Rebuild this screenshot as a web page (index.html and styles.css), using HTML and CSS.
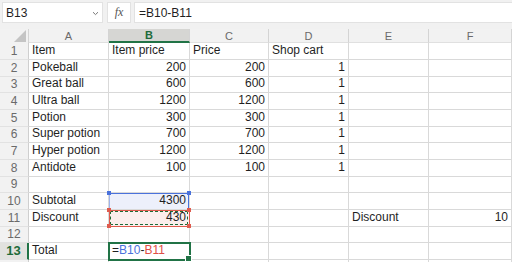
FILE: index.html
```html
<!DOCTYPE html>
<html lang="en">
<head>
  <meta charset="UTF-8" />
  <title>Pokemart sheet</title>
  <link rel="stylesheet" href="styles.css">
</head>
<body>
  <!-- Formula bar -->
  <div class="toolbar">
    <div class="name-box">
      <span>B13</span>
      <svg class="chevron" width="7" height="5" viewBox="0 0 7 5"><path d="M1 1.2 L3.5 3.6 L6 1.2" fill="none" stroke="#777" stroke-width="1"/></svg>
    </div>
    <div class="fx-box"><span class="fx">fx</span></div>
    <div class="formula-box">=B10-B11</div>
  </div>

  <!-- Sheet -->
  <div class="sheet">
    <div class="hd corner"><span class="tri"></span></div>
    <div class="hd col">A</div>
    <div class="hd col sel">B</div>
    <div class="hd col">C</div>
    <div class="hd col">D</div>
    <div class="hd col">E</div>
    <div class="hd col">F</div>

    <div class="hd row">1</div>
    <div class="c">Item</div><div class="c">Item price</div><div class="c">Price</div><div class="c">Shop cart</div><div class="c"></div><div class="c"></div>

    <div class="hd row">2</div>
    <div class="c">Pokeball</div><div class="c n">200</div><div class="c n">200</div><div class="c n">1</div><div class="c"></div><div class="c"></div>

    <div class="hd row">3</div>
    <div class="c">Great ball</div><div class="c n">600</div><div class="c n">600</div><div class="c n">1</div><div class="c"></div><div class="c"></div>

    <div class="hd row">4</div>
    <div class="c">Ultra ball</div><div class="c n">1200</div><div class="c n">1200</div><div class="c n">1</div><div class="c"></div><div class="c"></div>

    <div class="hd row">5</div>
    <div class="c">Potion</div><div class="c n">300</div><div class="c n">300</div><div class="c n">1</div><div class="c"></div><div class="c"></div>

    <div class="hd row">6</div>
    <div class="c">Super potion</div><div class="c n">700</div><div class="c n">700</div><div class="c n">1</div><div class="c"></div><div class="c"></div>

    <div class="hd row">7</div>
    <div class="c">Hyper potion</div><div class="c n">1200</div><div class="c n">1200</div><div class="c n">1</div><div class="c"></div><div class="c"></div>

    <div class="hd row">8</div>
    <div class="c">Antidote</div><div class="c n">100</div><div class="c n">100</div><div class="c n">1</div><div class="c"></div><div class="c"></div>

    <div class="hd row">9</div>
    <div class="c"></div><div class="c"></div><div class="c"></div><div class="c"></div><div class="c"></div><div class="c"></div>

    <div class="hd row">10</div>
    <div class="c">Subtotal</div><div class="c n ref-blue">4300<i class="h tl"></i><i class="h tr"></i></div><div class="c"></div><div class="c"></div><div class="c"></div><div class="c"></div>

    <div class="hd row">11</div>
    <div class="c">Discount</div><div class="c n ref-red">430<i class="h tl"></i><i class="h tr"></i><i class="h bl"></i><i class="h br"></i></div><div class="c"></div><div class="c"></div><div class="c">Discount</div><div class="c n">10</div>

    <div class="hd row">12</div>
    <div class="c"></div><div class="c"></div><div class="c"></div><div class="c"></div><div class="c"></div><div class="c"></div>

    <div class="hd row sel">13</div>
    <div class="c">Total</div><div class="c active">=<span class="blue">B10</span>-<span class="red">B11</span></div><div class="c"></div><div class="c"></div><div class="c"></div><div class="c"></div>

    <div class="hd row"></div>
    <div class="c"></div><div class="c"></div><div class="c"></div><div class="c"></div><div class="c"></div><div class="c"></div>
  </div>
</body>
</html>
```

FILE: styles.css
```css
* { box-sizing: border-box; margin: 0; padding: 0; }
body {
  background: #fff;
  font-family: 'Liberation Sans', Arial, sans-serif;
  color: #1f1f1f;
  width: 512px;
  height: 262px;
  overflow: hidden;
}

/* formula bar */
.toolbar {
  display: flex;
  align-items: flex-start;
  height: 29px;
  padding: 2px 0 0 2px;
  background: #f1f1f1;
}
.name-box {
  display: flex;
  align-items: center;
  justify-content: space-between;
  width: 101px;
  height: 21px;
  padding: 0 3px 0 3px;
  background: #fff;
  border: 1px solid #e2e2e2;
  font-size: 12px;
}
.chevron { margin-top: 1px; }
.fx-box {
  display: flex;
  align-items: center;
  justify-content: center;
  width: 24px;
  height: 21px;
  margin-left: 4px;
  background: #fff;
  border: 1px solid #e2e2e2;
}
.fx {
  font-family: 'Liberation Serif', 'Times New Roman', serif;
  font-style: italic;
  font-size: 12px;
  color: #555;
}
.formula-box {
  flex: 1;
  height: 21px;
  margin-left: 3px;
  padding: 3px 0 0 4px;
  background: #fff;
  border: 1px solid #e2e2e2;
  border-right: none;
  font-size: 12px;
}

/* grid */
.sheet {
  display: grid;
  grid-template-columns: 29px 80px 81px 79px 80px 80px 83px;
  grid-template-rows: 14px repeat(4, 17px 17px 16px) 17px 17px;
}
.hd {
  background: #f2f2f2;
  color: #6a6a6a;
  font-size: 11px;
  display: flex;
  align-items: center;
  justify-content: center;
}
.corner {
  position: relative;
  border-right: 1px solid #d4d4d4;
}
.tri {
  position: absolute;
  right: 2px;
  bottom: 1px;
  width: 12px;
  height: 12px;
  background: #c4c4c4;
  clip-path: polygon(100% 0, 100% 100%, 0 100%);
}
.col {
  border-right: 1px solid #d4d4d4;
  border-bottom: 1px solid #e0e0e0;
}
.col.sel {
  background: #d6d6d3;
  color: #1d6b3a;
  font-weight: bold;
  border-bottom: 2px solid #217346;
}
.row {
  font-size: 12px;
  border-bottom: 1px solid #e2e2e2;
  border-right: 1px solid #cfcfcf;
  align-items: flex-end;
  padding-bottom: 1px;
}
.row.sel {
  background: #e2e2df;
  color: #1d6b3a;
  font-weight: bold;
  font-size: 13px;
  border-right: 2px solid #217346;
}

.c {
  position: relative;
  display: flex;
  align-items: flex-end;
  padding: 0 3px 1px 3px;
  font-size: 12px;
  line-height: 15px;
  white-space: nowrap;
  border-right: 1px solid #d9d9d9;
  border-bottom: 1px solid #d9d9d9;
}
.c.n { justify-content: flex-end; }

/* formula references */
.ref-blue {
  background: #edf0fb;
  box-shadow: inset 0 1px 0 #4a72dc, inset 1px 0 0 #9fb3ec, inset -1px 0 0 #4a72dc;
}
.ref-red {
  background: #fbeeec;
  outline: 1px solid #df5b4e;
  outline-offset: -1px;
}
.ref-red::after {
  content: "";
  position: absolute;
  inset: 1px;
  border: 1px dashed #1e6b37;
}
.h {
  position: absolute;
  width: 4px;
  height: 4px;
  z-index: 2;
}
.ref-blue .h { background: #4a72dc; }
.ref-red .h { background: #df5b4e; }
.h.tl { left: -2px; top: -2px; }
.h.tr { right: -2px; top: -2px; }
.h.bl { left: -2px; bottom: -2px; }
.h.br { right: -2px; bottom: -2px; }

.active {
  outline: 2px solid #217346;
  outline-offset: -1px;
  z-index: 1;
}
.active::after {
  content: "";
  position: absolute;
  right: -3px;
  bottom: -3px;
  width: 5px;
  height: 5px;
  background: #217346;
  border: 1px solid #fff;
}
.blue { color: #4a72dc; }
.red { color: #df4e46; }
```
